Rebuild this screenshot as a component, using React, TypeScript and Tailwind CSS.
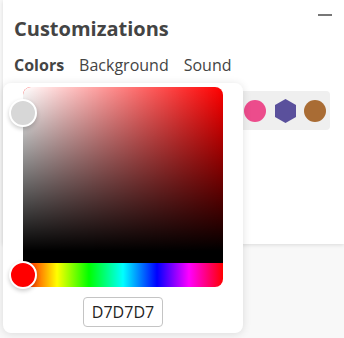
import { useState } from 'react';

const swatches = [
  { color: '#e24b4b', shape: 'circle' },
  { color: '#f2994a', shape: 'circle' },
  { color: '#f2c94c', shape: 'circle' },
  { color: '#27ae60', shape: 'circle' },
  { color: '#2d9cdb', shape: 'circle' },
  { color: '#9b51e0', shape: 'circle' },
  { color: '#333333', shape: 'circle' },
  { color: '#ec4c8c', shape: 'circle' },
  { color: '#5a509c', shape: 'hex' },
  { color: '#a96c34', shape: 'circle' },
];

function Swatch({ color, shape }: { color: string; shape: string }) {
  if (shape === 'hex') {
    return (
      <svg width="21" height="24" viewBox="0 0 21 24">
        <polygon points="10.5,0 21,6 21,18 10.5,24 0,18 0,6" fill={color} />
      </svg>
    );
  }
  return <div className="h-[22px] w-[22px] rounded-full" style={{ backgroundColor: color }} />;
}

function ColorPicker({ hex }: { hex: string }) {
  return (
    <div className="absolute left-[3px] top-[83px] w-[240px] rounded-[8px] bg-white px-[20px] pb-[6px] pt-[4px] shadow-[0_1px_8px_rgba(0,0,0,0.12)]">
      <div className="relative flex h-[200px] w-[200px] flex-col">
        <div className="relative h-[176px] rounded-t-[8px] border-b-[12px] border-black bg-[linear-gradient(to_top,#000,rgba(0,0,0,0)),linear-gradient(to_right,#fff,rgba(255,255,255,0)),linear-gradient(#f00,#f00)]">
          <div className="absolute left-0 top-[26px] h-[28px] w-[28px] -translate-x-1/2 -translate-y-1/2 rounded-full border-2 border-white bg-[#d7d7d7] shadow-[0_2px_4px_rgba(0,0,0,0.2)]" />
        </div>
        <div className="relative h-[24px] rounded-b-[8px] bg-[linear-gradient(to_right,#f00_0%,#ff0_17%,#0f0_33%,#0ff_50%,#00f_67%,#f0f_83%,#f00_100%)]">
          <div className="absolute left-0 top-1/2 h-[28px] w-[28px] -translate-x-1/2 -translate-y-1/2 rounded-full border-2 border-white bg-[#ff0000] shadow-[0_2px_4px_rgba(0,0,0,0.2)]" />
        </div>
      </div>
      <div className="mt-[10px] flex justify-center">
        <input
          readOnly
          value={hex}
          className="h-[30px] w-[80px] rounded-[4px] border border-[#c4c4c4] text-center font-['Open_Sans',sans-serif] text-[16px] text-[#222] outline-none"
        />
      </div>
    </div>
  );
}

export default function App() {
  const [tab, setTab] = useState('Colors');
  const tabs = ['Colors', 'Background', 'Sound'];

  return (
    <div className="relative h-[338px] w-[344px] overflow-hidden bg-[#f8f8f8] font-['Open_Sans',sans-serif] text-[#444]">
      <div className="ml-[3px] h-[244px] bg-white pl-[11px] pr-[14px] pt-[15px] shadow-[0_1px_4px_rgba(0,0,0,0.12)]">
        <div className="flex items-start justify-between">
          <h1 className="text-[20px] font-bold leading-[28px]">Customizations</h1>
          <div className="mr-[-2px] mt-[-1px] h-[2px] w-[14px] bg-[#777]" />
        </div>
        <div className="mt-[11px] flex gap-[15px] text-[16px] leading-[22px]">
          {tabs.map((t) => (
            <button
              key={t}
              onClick={() => setTab(t)}
              className={t === tab ? 'font-bold' : 'font-normal'}
            >
              {t}
            </button>
          ))}
        </div>
        <div className="mt-[15px] flex h-[39px] items-center justify-end rounded-[4px] bg-[#efefef]">
          {swatches.map((s, i) => (
            <div key={i} className="flex w-[30px] items-center justify-center">
              <Swatch color={s.color} shape={s.shape} />
            </div>
          ))}
        </div>
      </div>
      <ColorPicker hex="D7D7D7" />
    </div>
  );
}
